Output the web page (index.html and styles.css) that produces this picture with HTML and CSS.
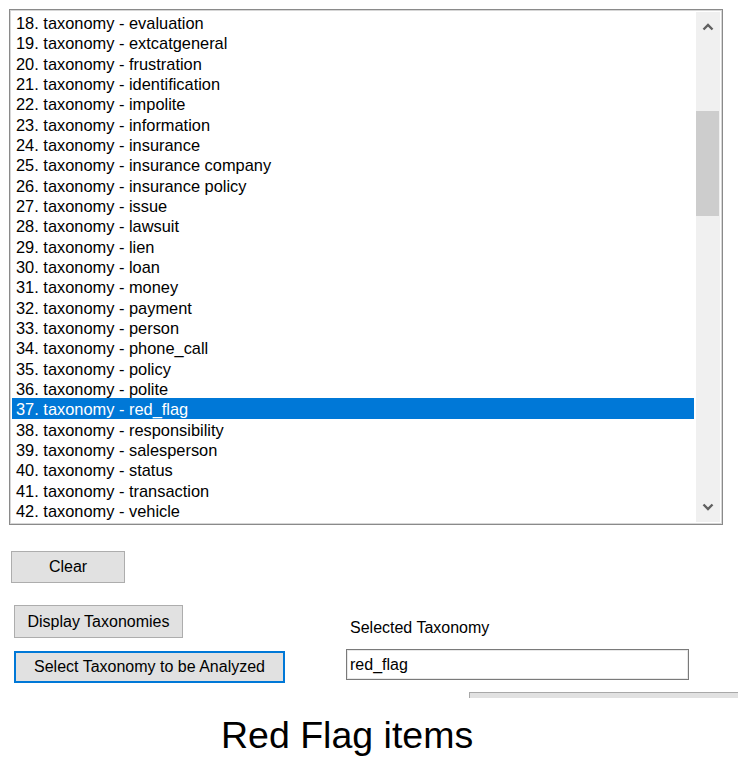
FILE: index.html
```html
<!DOCTYPE html>
<html>
<head>
<meta charset="utf-8">
<link rel="stylesheet" href="styles.css">
</head>
<body>
<div class="page">
  <div class="listbox">
    <ul class="items">
      <li>18. taxonomy - evaluation</li>
      <li>19. taxonomy - extcatgeneral</li>
      <li>20. taxonomy - frustration</li>
      <li>21. taxonomy - identification</li>
      <li>22. taxonomy - impolite</li>
      <li>23. taxonomy - information</li>
      <li>24. taxonomy - insurance</li>
      <li>25. taxonomy - insurance company</li>
      <li>26. taxonomy - insurance policy</li>
      <li>27. taxonomy - issue</li>
      <li>28. taxonomy - lawsuit</li>
      <li>29. taxonomy - lien</li>
      <li>30. taxonomy - loan</li>
      <li>31. taxonomy - money</li>
      <li>32. taxonomy - payment</li>
      <li>33. taxonomy - person</li>
      <li>34. taxonomy - phone_call</li>
      <li>35. taxonomy - policy</li>
      <li>36. taxonomy - polite</li>
      <li class="selected">37. taxonomy - red_flag</li>
      <li>38. taxonomy - responsibility</li>
      <li>39. taxonomy - salesperson</li>
      <li>40. taxonomy - status</li>
      <li>41. taxonomy - transaction</li>
      <li>42. taxonomy - vehicle</li>
    </ul>
    <div class="scrollbar">
      <div class="sb-btn">
        <svg width="12" height="8" viewBox="0 0 12 8"><path d="M1.5 6.5 L6 2 L10.5 6.5" fill="none" stroke="#606060" stroke-width="2.4"/></svg>
      </div>
      <div class="sb-track">
        <div class="sb-thumb"></div>
      </div>
      <div class="sb-btn">
        <svg width="12" height="8" viewBox="0 0 12 8"><path d="M1.5 1.5 L6 6 L10.5 1.5" fill="none" stroke="#606060" stroke-width="2.4"/></svg>
      </div>
    </div>
  </div>

  <div class="controls">
    <div class="buttons">
      <button class="btn btn-clear">Clear</button>
      <button class="btn btn-display">Display Taxonomies</button>
      <button class="btn btn-select">Select Taxonomy to be Analyzed</button>
    </div>
    <div class="selected-panel">
      <div class="label">Selected Taxonomy</div>
      <div class="textbox">red_flag</div>
    </div>
  </div>

  <div class="partial-bar"></div>
  <div class="caption">Red Flag items</div>
</div>
</body>
</html>
```

FILE: styles.css
```css
html, body {
  margin: 0;
  padding: 0;
  background: #ffffff;
  overflow: hidden;
}

.page {
  padding: 9px 0 0 9px;
  font-family: "Liberation Sans", Arial, sans-serif;
  color: #000;
}

.listbox {
  width: 708px;
  height: 510px;
  border: 1px solid #8a8a8a;
  box-shadow: inset 0 0 0 1px #d6d6d6;
  padding: 2px;
  display: flex;
  gap: 2px;
  background: #fff;
}

.items {
  list-style: none;
  margin: 0;
  padding: 0;
  flex: 1;
  display: grid;
  grid-auto-rows: 20.33px;
  font-size: 16.4px;
  overflow: hidden;
}

.items li {
  padding: 3px 0 0 4px;
  line-height: 17.33px;
  white-space: nowrap;
}

.items li.selected {
  background: #0078d7;
  color: #fff;
}

.scrollbar {
  width: 24px;
  background: #f0f0f0;
  display: flex;
  flex-direction: column;
}

.sb-btn {
  height: 30px;
  display: flex;
  align-items: center;
  justify-content: center;
}

.sb-track {
  flex: 1;
}

.sb-thumb {
  margin-top: 69px;
  height: 105px;
  width: 23px;
  background: #cdcdcd;
}

.controls {
  display: flex;
  margin-top: 26px;
}

.buttons {
  display: flex;
  flex-direction: column;
  align-items: flex-start;
  width: 276px;
}

.btn {
  font-family: "Liberation Sans", Arial, sans-serif;
  font-size: 16px;
  color: #000;
  background: #e1e1e1;
  border: 1px solid #adadad;
  padding: 0;
  margin: 0;
}

.btn-clear {
  margin-left: 2px;
  width: 114px;
  height: 32px;
}

.btn-display {
  margin-left: 5px;
  margin-top: 22px;
  width: 169px;
  height: 33px;
}

.btn-select {
  margin-left: 5px;
  margin-top: 13px;
  width: 271px;
  height: 32px;
  border: 2px solid #0078d7;
}

.selected-panel {
  margin-left: 61px;
  padding-top: 67px;
}

.label {
  font-size: 16px;
  line-height: 20px;
  padding-left: 4px;
}

.textbox {
  margin-top: 11px;
  width: 338px;
  height: 29px;
  border: 1px solid #7a7a7a;
  box-shadow: inset 0 0 0 1px #e8e8e8;
  font-size: 16px;
  line-height: 29px;
  padding-left: 3px;
  box-sizing: content-box;
}

.partial-bar {
  margin-top: 9px;
  margin-left: 460px;
  width: 290px;
  height: 5px;
  background: #e1e1e1;
  border-top: 1px solid #a8a8a8;
  border-left: 1px solid #a8a8a8;
}

.caption {
  margin-top: 16px;
  margin-left: 212px;
  font-size: 37.5px;
}
```
